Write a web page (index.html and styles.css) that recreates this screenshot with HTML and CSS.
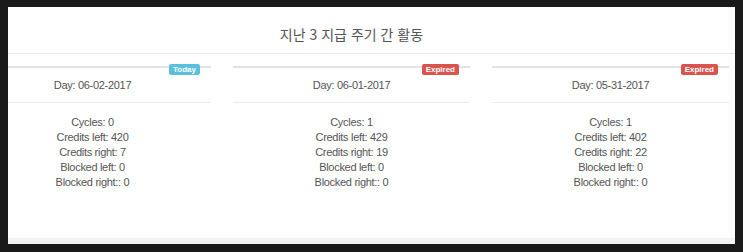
FILE: index.html
```html
<!DOCTYPE html>
<html lang="ko">
<head>
<meta charset="utf-8">
<title>Activity</title>
<link rel="stylesheet" href="styles.css">
</head>
<body>
<div class="panel">
  <div class="panel-head">
    <h3 class="title">지난 3 지급 주기 간 활동</h3>
  </div>
  <div class="panel-body">
    <div class="cards">
      <div class="card">
        <span class="badge badge-today">Today</span>
        <div class="day">Day: 06-02-2017</div>
        <ul class="stats">
          <li>Cycles: 0</li>
          <li>Credits left: 420</li>
          <li>Credits right: 7</li>
          <li>Blocked left: 0</li>
          <li>Blocked right:: 0</li>
        </ul>
      </div>
      <div class="card">
        <span class="badge badge-expired">Expired</span>
        <div class="day">Day: 06-01-2017</div>
        <ul class="stats">
          <li>Cycles: 1</li>
          <li>Credits left: 429</li>
          <li>Credits right: 19</li>
          <li>Blocked left: 0</li>
          <li>Blocked right:: 0</li>
        </ul>
      </div>
      <div class="card">
        <span class="badge badge-expired">Expired</span>
        <div class="day">Day: 05-31-2017</div>
        <ul class="stats">
          <li>Cycles: 1</li>
          <li>Credits left: 402</li>
          <li>Credits right: 22</li>
          <li>Blocked left: 0</li>
          <li>Blocked right:: 0</li>
        </ul>
      </div>
    </div>
  </div>
  <div class="panel-foot"></div>
</div>
</body>
</html>
```
FILE: styles.css
```css
* { box-sizing: border-box; }
html, body { height: 100%; }
body {
  margin: 0;
  background: #1a1a1a;
  padding: 7px 8px 8px 8px;
  font-family: "Liberation Sans", Arial, sans-serif;
  color: #555;
}
.panel {
  height: 237px;
  background: #fff;
  display: flex;
  flex-direction: column;
  overflow: hidden;
}
.panel-head {
  height: 47px;
  padding: 13px 40px 0 0;
  border-bottom: 1px solid #e8e8e8;
  text-align: center;
}
.title {
  margin: 0;
  font-family: "Noto Sans CJK KR", "Liberation Sans", sans-serif;
  font-weight: 400;
  font-size: 14px;
  line-height: 28px;
  color: #555;
}
.panel-body {
  flex: 1;
  padding-top: 12px;
}
.cards {
  display: flex;
  gap: 22px;
  margin-left: -34px;
}
.card {
  flex: none;
  width: 237px;
  position: relative;
  border-top: 2px solid #e3e3e3;
  text-align: center;
}
.badge {
  position: absolute;
  top: -4px;
  right: 11px;
  height: 11px;
  line-height: 11px;
  padding: 0 4px;
  border-radius: 2px;
  font-size: 8px;
  font-weight: 700;
  color: #fff;
}
.badge-today { background: #5bc0de; }
.badge-expired { background: #d9534f; }
.day {
  height: 35px;
  line-height: 34px;
  border-bottom: 1px solid #eee;
  font-size: 11px;
  letter-spacing: -0.3px;
}
.stats {
  list-style: none;
  margin: 0;
  padding: 12px 0 0 0;
  font-size: 11px;
  line-height: 15px;
  letter-spacing: -0.3px;
}
.panel-foot {
  height: 6px;
  background: #f4f4f4;
}
```
